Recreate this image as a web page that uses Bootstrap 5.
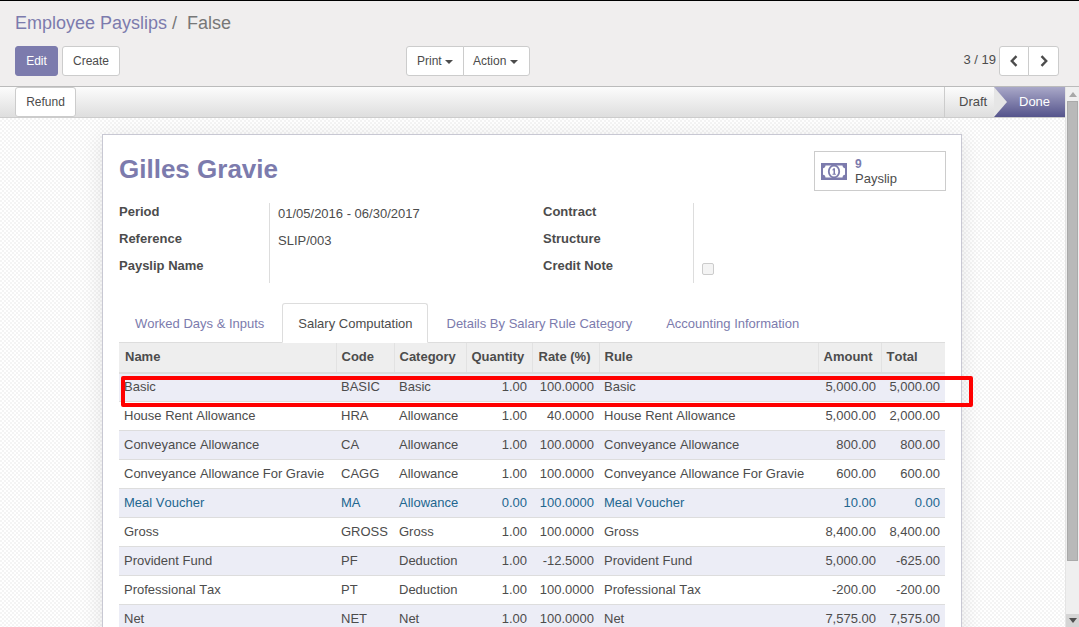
<!DOCTYPE html>
<html lang="en">

<head>
    <meta charset="UTF-8">
    <meta name="viewport" content="width=device-width, initial-scale=1">
    <title>Employee Payslips</title>
    <link href="https://cdn.jsdelivr.net/npm/bootstrap@5.3.3/dist/css/bootstrap.min.css" rel="stylesheet">
    <style>
        html, body {
            height: 627px;
            overflow: hidden;
        }

        body {
            font-family: "Liberation Sans", Arial, sans-serif;
            font-size: 13px;
            color: #4c4c4c;
            background: #fff;
            border-top: 1px solid #000;
            font-kerning: none;
        }

        /* top panel */
        .ctl-panel {
            height: 86px;
            background: #f0eeee;
            border-bottom: 1px solid #bbb;
            padding: 0 20px 0 15px;
        }

        .crumb {
            font-size: 18px;
            line-height: 20px;
            padding-top: 12px;
            height: 45px;
            color: #777;
        }

        .crumb a {
            color: #7c7bad;
            text-decoration: none;
        }

        .ctl-btn {
            font-size: 12px;
            line-height: 18px;
            height: 30px;
            padding: 5px 10px;
            border: 1px solid #ccc;
            border-radius: 3px;
            background: #fff;
            color: #4c4c4c;
        }

        .ctl-btn.go {
            background: #7c7bad;
            border-color: #7c7bad;
            color: #fff;
            width: 43px;
        }

        .left-btns {
            width: 105px;
        }

        .print-group {
            margin-left: 286px;
        }

        .joined .ctl-btn {
            border-radius: 0;
        }

        .joined .ctl-btn:first-child {
            border-radius: 3px 0 0 3px;
        }

        .joined .ctl-btn:last-child {
            border-radius: 0 3px 3px 0;
            margin-left: -1px;
        }

        .print-group .ctl-btn:last-child {
            padding-left: 9px;
            padding-right: 11px;
        }

        .caret-down {
            display: inline-block;
            vertical-align: middle;
            border-top: 4px solid #4c4c4c;
            border-left: 4px solid transparent;
            border-right: 4px solid transparent;
        }

        .joined .pager-btn {
            width: 30px;
            padding: 0;
        }

        .joined .pager-btn:last-child {
            width: 31px;
        }

        .pager-btn svg {
            display: block;
            margin: 0 auto;
        }

        .pager-text {
            font-size: 13px;
            margin-right: 3px;
            margin-top: -2px;
        }

        /* main area */
        .body-wrap {
            height: 540px;
        }

        .main-col {
            width: 1065px;
            overflow: hidden;
        }

        .status-row {
            height: 31px;
            background: linear-gradient(#fcfcfc, #dedede);
            border-bottom: 1px solid #ccc;
            padding-left: 15px;
        }

        .status-row .ctl-btn {
            height: 30px;
            width: 61px;
            padding: 5px 0;
        }

        .state-draft {
            width: 50px;
            height: 30px;
            line-height: 29px;
            padding-left: 14px;
            border-left: 1px solid #ccc;
        }

        .state-done {
            width: 71px;
            height: 30px;
            line-height: 29px;
            padding-left: 25px;
            color: #fff;
            background: linear-gradient(#a9a8c8, #55548c);
            position: relative;
        }

        .state-done::before {
            content: "";
            position: absolute;
            left: 0;
            top: 0;
            border-top: 15px solid transparent;
            border-bottom: 15px solid transparent;
            border-left: 13px solid #e6e6e6;
        }

        .sheet-bg {
            height: 509px;
            background-color: #fff;
            background-image: repeating-conic-gradient(#f4f4f4 0 25%, #fff 0 50%);
            background-size: 4px 4px;
            padding: 16px 0 0 102px;
        }

        .sheet-card {
            width: 860px;
            height: 520px;
            background: #fff;
            border: 1px solid #c8c8d3;
            box-shadow: 0 4px 20px rgba(0, 0, 0, .1);
            padding: 0 16px;
        }

        .emp-name {
            font-size: 26px;
            font-weight: 700;
            line-height: 30px;
            color: #7c7bad;
            margin: 0;
            padding-top: 19px;
            height: 68px;
        }

        .stat-box {
            width: 132px;
            height: 40px;
            border: 1px solid #ccc;
            margin-top: 16px;
            margin-right: -1px;
            line-height: 14px;
            padding: 5px 0 0 6px;
            gap: 8px;
        }

        .stat-box b {
            color: #7c7bad;
            font-size: 12px;
            display: block;
            margin-bottom: 1px;
        }

        .stat-box svg {
            margin-top: 6px;
            flex: none;
        }

        .info-row {
            height: 80px;
        }

        .info-left {
            width: 151px;
            font-weight: 700;
            border-right: 1px solid #ddd;
            flex: none;
        }

        .info-val {
            width: 273px;
            flex: none;
            padding-left: 8px;
            padding-top: 2px;
        }

        .info-left2 {
            width: 151px;
            font-weight: 700;
            border-right: 1px solid #ddd;
            flex: none;
        }

        .info-line {
            height: 27px;
            line-height: 18px;
        }

        .info-left .info-line, .info-left2 .info-line {
            line-height: 17px;
        }

        .mini-check {
            width: 12px;
            height: 12px;
            border: 1px solid #ccc;
            border-radius: 2px;
            background: #f4f4f4;
            margin: 5px 0 0 8px;
        }

        /* tabs */
        .tab-bar {
            margin-top: 20px;
            height: 39px;
            border: 0;
        }

        .tab-bar .nav-item {
            margin-right: 2px;
        }

        .tab-bar .nav-link {
            font-size: 13px;
            color: #7c7bad;
            height: 40px;
            line-height: 18px;
            padding: 11px 15px;
            border: 1px solid transparent;
            border-radius: 3px 3px 0 0;
            background: none;
        }

        .tab-bar .nav-link.active {
            color: #4c4c4c;
            background: #fff;
            border-color: #ddd #ddd #fff;
            padding-right: 14px;
            margin-right: 1px;
            position: relative;
            z-index: 1;
        }

        /* table */
        .slip-table {
            width: 826px;
            table-layout: fixed;
            border-collapse: collapse;
            margin: 0;
            font-size: 13px;
            color: #4c4c4c;
        }

        .slip-table th {
            background: #eee;
            height: 30px;
            font-weight: 700;
            padding: 0 5px 2px 5px;
            border-left: 1px solid #e2e2e2;
            border-top: 1px solid #ddd;
            border-bottom: 2px solid #ddd;
            white-space: nowrap;
            vertical-align: middle;
        }

        .slip-table th:first-child {
            border-left: 0;
            padding-left: 6px;
        }

        .slip-table th:nth-child(5) {
            padding-left: 6px;
        }

        .slip-table td {
            height: 29px;
            padding: 0 5px;
            border-bottom: 1px solid #ddd;
            white-space: nowrap;
            vertical-align: middle;
            background: #fff;
            color: #4c4c4c;
        }

        .slip-table tr:first-child td {
            padding-bottom: 2px;
        }

        .slip-table tr.odd-row td {
            background: #ecedf6;
        }

        .slip-table tr.muted-row td {
            color: #22668f;
        }

        .w-name { width: 217px; }
        .w-code { width: 58px; }
        .w-cat { width: 72px; }
        .w-qty { width: 66px; }
        .w-rate { width: 67px; }
        .w-rule { width: 219px; }
        .w-amt { width: 63px; }
        .w-tot { width: 64px; }

        /* red mark over the first row */
        .red-mark {
            position: absolute;
            left: 121px;
            top: 376px;
            width: 852px;
            height: 31px;
            border: 4px solid #f00;
            border-radius: 2px;
            pointer-events: none;
        }

        /* scrollbar */
        .fake-scroll {
            width: 14px;
            background: #efefef;
            border-left: 1px solid #e4e4e4;
        }

        .scroll-up, .scroll-down {
            height: 14px;
            flex: none;
        }

        .scroll-thumb {
            height: 460px;
            margin: 0 1px;
            background: #b9b9b9;
            border: 1px solid #aaa;
        }

        .scroll-down {
            background: #d5d5d5;
            height: 13px;
            margin-top: auto;
        }

        .scroll-up svg, .scroll-down svg {
            display: block;
            margin: 0 auto;
        }
    </style>
</head>

<body>
    <!-- Control panel -->
    <div class="ctl-panel">
        <div class="crumb"><a href="#">Employee Payslips</a> /&nbsp; False</div>
        <div class="d-flex align-items-start">
            <div class="left-btns d-flex gap-1">
                <button class="ctl-btn go" type="button">Edit</button>
                <button class="ctl-btn" type="button">Create</button>
            </div>
            <div class="joined print-group d-flex">
                <button class="ctl-btn" type="button">Print <span class="caret-down"></span></button>
                <button class="ctl-btn" type="button">Action <span class="caret-down"></span></button>
            </div>
            <div class="ms-auto d-flex align-items-center">
                <span class="pager-text">3 / 19</span>
                <div class="joined d-flex">
                    <button class="ctl-btn pager-btn" type="button" aria-label="Previous">
                        <svg width="10" height="12" viewBox="0 0 10 12"><path d="M7.500 1.200 2.800 6l4.700 4.800" fill="none" stroke="#4c4c4c" stroke-width="2.400"/></svg>
                    </button>
                    <button class="ctl-btn pager-btn" type="button" aria-label="Next">
                        <svg width="10" height="12" viewBox="0 0 10 12"><path d="M2.500 1.200 7.200 6l-4.700 4.800" fill="none" stroke="#4c4c4c" stroke-width="2.400"/></svg>
                    </button>
                </div>
            </div>
        </div>
    </div>

    <div class="body-wrap d-flex">
        <div class="main-col">
            <!-- Status bar -->
            <div class="status-row d-flex justify-content-between">
                <button class="ctl-btn" type="button">Refund</button>
                <div class="d-flex">
                    <div class="state-draft">Draft</div>
                    <div class="state-done">Done</div>
                </div>
            </div>

            <div class="sheet-bg">
                <div class="sheet-card">
                    <div class="d-flex justify-content-between">
                        <h1 class="emp-name">Gilles Gravie</h1>
                        <div class="stat-box d-flex">
                            <svg width="26" height="17" viewBox="0 0 26 17">
                                <path fill="#7c7bad" fill-rule="evenodd" d="M0 0h26v17H0zM4.500 2.500c0 1.500-1 2.600-2.500 2.700v6.600c1.500.1 2.500 1.200 2.500 2.700h17c0-1.500 1-2.600 2.500-2.700V5.200c-1.500-.1-2.500-1.200-2.500-2.700z"/>
                                <ellipse cx="13" cy="8.500" rx="5.200" ry="6" fill="none" stroke="#7c7bad" stroke-width="1.800"/>
                                <path fill="#7c7bad" d="M12.500 5.200h1.500v5.600h.9v1h-3.400v-1h1V7.200l-1 .3v-1z"/>
                            </svg>
                            <div><b>9</b>Payslip</div>
                        </div>
                    </div>

                    <div class="info-row d-flex">
                        <div class="info-left">
                            <div class="info-line">Period</div>
                            <div class="info-line">Reference</div>
                            <div class="info-line">Payslip Name</div>
                        </div>
                        <div class="info-val">
                            <div class="info-line">01/05/2016 - 06/30/2017</div>
                            <div class="info-line">SLIP/003</div>
                        </div>
                        <div class="info-left2">
                            <div class="info-line">Contract</div>
                            <div class="info-line">Structure</div>
                            <div class="info-line">Credit Note</div>
                        </div>
                        <div class="d-flex align-items-end pb-2">
                            <div class="mini-check"></div>
                        </div>
                    </div>

                    <ul class="nav nav-tabs tab-bar">
                        <li class="nav-item"><a class="nav-link" href="#">Worked Days &amp; Inputs</a></li>
                        <li class="nav-item"><a class="nav-link active" href="#">Salary Computation</a></li>
                        <li class="nav-item"><a class="nav-link" href="#">Details By Salary Rule Category</a></li>
                        <li class="nav-item"><a class="nav-link" href="#">Accounting Information</a></li>
                    </ul>

                    <table class="table slip-table">
                        <colgroup>
                            <col class="w-name"><col class="w-code"><col class="w-cat"><col class="w-qty">
                            <col class="w-rate"><col class="w-rule"><col class="w-amt"><col class="w-tot">
                        </colgroup>
                        <thead>
                            <tr>
                                <th>Name</th><th>Code</th><th>Category</th><th>Quantity</th>
                                <th>Rate (%)</th><th>Rule</th><th>Amount</th><th>Total</th>
                            </tr>
                        </thead>
                        <tbody id="slipRows"></tbody>
                    </table>
                </div>
            </div>
        </div>

        <div class="fake-scroll d-flex flex-column">
            <div class="scroll-up">
                <svg width="12" height="14" viewBox="0 0 12 14"><path d="M6 5l4 5H2z" fill="#a8a8a8"/></svg>
            </div>
            <div class="scroll-thumb"></div>
            <div class="scroll-down">
                <svg width="12" height="13" viewBox="0 0 12 13"><path d="M2 4h8l-4 5z" fill="#505050"/></svg>
            </div>
        </div>
    </div>

    <div class="red-mark"></div>

    <script>
        // Salary lines of the payslip
        const lines = [
            ['Basic', 'BASIC', 'Basic', '1.00', '100.0000', 'Basic', '5,000.00', '5,000.00'],
            ['House Rent Allowance', 'HRA', 'Allowance', '1.00', '40.0000', 'House Rent Allowance', '5,000.00', '2,000.00'],
            ['Conveyance Allowance', 'CA', 'Allowance', '1.00', '100.0000', 'Conveyance Allowance', '800.00', '800.00'],
            ['Conveyance Allowance For Gravie', 'CAGG', 'Allowance', '1.00', '100.0000', 'Conveyance Allowance For Gravie', '600.00', '600.00'],
            ['Meal Voucher', 'MA', 'Allowance', '0.00', '100.0000', 'Meal Voucher', '10.00', '0.00'],
            ['Gross', 'GROSS', 'Gross', '1.00', '100.0000', 'Gross', '8,400.00', '8,400.00'],
            ['Provident Fund', 'PF', 'Deduction', '1.00', '-12.5000', 'Provident Fund', '5,000.00', '-625.00'],
            ['Professional Tax', 'PT', 'Deduction', '1.00', '100.0000', 'Professional Tax', '-200.00', '-200.00'],
            ['Net', 'NET', 'Net', '1.00', '100.0000', 'Net', '7,575.00', '7,575.00']
        ];
        const numeric = [3, 4, 6, 7];
        const slipRows = document.getElementById('slipRows');

        lines.forEach((line, index) => {
            const row = document.createElement('tr');
            if (index % 2 === 0) row.classList.add('odd-row');
            if (line[0] === 'Meal Voucher') row.classList.add('muted-row');

            line.forEach((value, col) => {
                const cell = document.createElement('td');
                cell.innerText = value;
                if (numeric.includes(col)) cell.classList.add('text-end');
                row.appendChild(cell);
            });
            slipRows.appendChild(row);
        });
    </script>
    <script src="https://cdn.jsdelivr.net/npm/bootstrap@5.3.3/dist/js/bootstrap.bundle.min.js"></script>
</body>

</html>
